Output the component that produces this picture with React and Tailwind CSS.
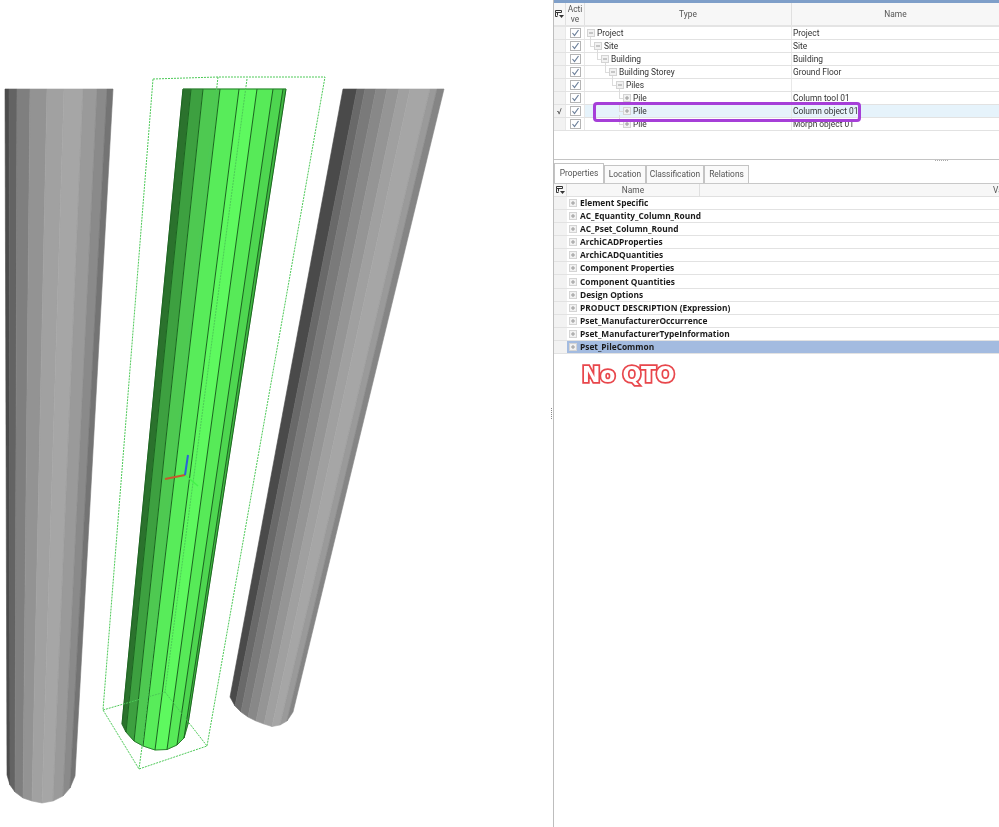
const greyLeft = {
  top: [5, 9, 17, 30, 47, 64, 83, 97, 107, 113],
  bottom: [[7, 775], [10, 785], [15, 792], [23, 798], [32, 801], [42, 803], [53, 801], [63, 796], [70, 788], [75, 776]],
  colors: ["#4c4c4c", "#636363", "#7f7f7f", "#939393", "#a1a1a1", "#a6a6a6", "#9a9a9a", "#8a8a8a", "#747474"],
};
const greyRight = {
  top: [343, 357, 365, 376, 387, 399, 410, 430, 437, 444],
  bottom: [[230, 697], [235, 706], [241, 712], [248, 717], [256, 721], [264, 724], [272, 726.5], [280, 725], [287, 721], [293, 712]],
  colors: ["#4a4a4a", "#696969", "#7a7a7a", "#888888", "#959595", "#a0a0a0", "#a6a6a6", "#9a9a9a", "#858585"],
};
const green = {
  top: [183, 191, 203, 220, 239, 257, 273, 283, 286],
  bottom: [[122, 724], [126, 732], [134, 741], [143, 746], [155, 750], [167, 749.5], [177, 745], [184, 738], [188, 724]],
  colors: ["#2b722d", "#3da040", "#4ec951", "#58ec5a", "#5ef95f", "#57ea58", "#4ed650", "#41b843"],
};

const Column = ({ data, lines }) => (
  <g>
    {data.colors.map((c, i) => {
      const a = data.bottom[i];
      const b = data.bottom[i + 1];
      return (
        <polygon
          key={i}
          points={`${data.top[i]},89 ${data.top[i + 1]},89 ${b[0]},${b[1]} ${a[0]},${a[1]}`}
          fill={c}
          stroke={c}
          strokeWidth="0.6"
        />
      );
    })}
    {lines &&
      data.top.map((x, i) => (
        <line key={i} x1={x} y1="89" x2={data.bottom[i][0]} y2={data.bottom[i][1]} stroke="#1c6420" strokeWidth="1" />
      ))}
  </g>
);

const Viewport = () => (
  <svg width="550" height="827" viewBox="0 0 550 827" className="block">
    <Column data={greyLeft} />
    <Column data={greyRight} />
    <Column data={green} lines />
    <line x1="183" y1="89" x2="286" y2="89" stroke="#2d7a30" strokeWidth="1" />
    <polyline
      points="122,724 126,732 134,741 143,746 155,750 167,749.5 177,745 184,738 188,724"
      fill="none"
      stroke="#1c6420"
      strokeWidth="0.8"
    />
    {/* selection box */}
    <g fill="none" stroke="#4cc957" strokeWidth="1" strokeDasharray="2 1">
      <polyline points="153,79 218,77 325,77 207,746 139,769 103,710 153,79" />
      <line x1="218" y1="77" x2="142" y2="747" />
      <line x1="247" y1="79" x2="165" y2="692" />
      <line x1="103" y1="710" x2="165" y2="692" />
      <line x1="165" y1="692" x2="207" y2="746" />
      <line x1="142" y1="747" x2="139" y2="769" />
    </g>
    {/* axis gizmo */}
    <line x1="185" y1="475" x2="198" y2="486" stroke="#46f04c" strokeWidth="1.5" />
    <line x1="185" y1="475" x2="165" y2="479" stroke="#c8592c" strokeWidth="2" />
    <line x1="185" y1="475" x2="188" y2="455" stroke="#2a63d8" strokeWidth="2" />
  </svg>
);

const ColumnMenu = () => (
  <svg width="9" height="8" viewBox="0 0 9 8" className="block">
    <path d="M0.5 0.5h6v2h-6zM0.5 2.5v4h2M2.5 2.5v3" fill="none" stroke="#333" />
    <path d="M4 5h5L6.5 8z" fill="#333" />
  </svg>
);

const Expander = ({ open }) => (
  <svg width="8" height="8" viewBox="0 0 8 8" className="block shrink-0">
    <rect x="0.5" y="0.5" width="7" height="7" fill="#f2f2f2" stroke="#d4d4d4" />
    <line x1="2" y1="4" x2="6" y2="4" stroke="#9a9a9a" />
    {!open && <line x1="4" y1="2" x2="4" y2="6" stroke="#9a9a9a" />}
  </svg>
);

const CheckBox = () => (
  <span className="flex h-[10px] w-[11px] items-center justify-center border border-[#b4b4b4] bg-white">
    <svg width="9" height="8" viewBox="0 0 9 8">
      <path d="M1.5 4l2 2.5L7.5 1" fill="none" stroke="#6b7f99" strokeWidth="1.2" />
    </svg>
  </span>
);

const treeRows = [
  { type: "Project", name: "Project", open: true, indent: "pl-[2px]" },
  { type: "Site", name: "Site", open: true, indent: "pl-[9px]", link: true },
  { type: "Building", name: "Building", open: true, indent: "pl-[16px]", link: true },
  { type: "Building Storey", name: "Ground Floor", open: true, indent: "pl-[24px]", link: true },
  { type: "Piles", name: "", open: true, indent: "pl-[31px]", link: true },
  { type: "Pile", name: "Column tool 01", indent: "pl-[38px]", link: true },
  { type: "Pile", name: "Column object 01", indent: "pl-[38px]", link: true, current: true },
  { type: "Pile", name: "Morph object 01", indent: "pl-[38px]", link: true },
];

const propertyRows = [
  "Element Specific",
  "AC_Equantity_Column_Round",
  "AC_Pset_Column_Round",
  "ArchiCADProperties",
  "ArchiCADQuantities",
  "Component Properties",
  "Component Quantities",
  "Design Options",
  "PRODUCT DESCRIPTION (Expression)",
  "Pset_ManufacturerOccurrence",
  "Pset_ManufacturerTypeInformation",
  "Pset_PileCommon",
];

const tabs = [
  { label: "Properties", width: "w-[50px]", active: true },
  { label: "Location", width: "w-[42px]" },
  { label: "Classification", width: "w-[58px]" },
  { label: "Relations", width: "w-[45px]" },
];

const TreeTable = () => (
  <div className="relative h-[160px] border-b border-[#c4c4c4]">
    <div className="h-[3px] bg-[#7f9fc9]" />
    <div className="flex h-[24px] border-b-2 border-[#e4e4e4] bg-[#f7f7f7] text-[#555]">
      <div className="flex w-[12px] items-center justify-center border-r border-[#e0e0e0]">
        <ColumnMenu />
      </div>
      <div className="flex w-[19px] items-center justify-center border-r border-[#e0e0e0] text-center leading-[10px]">
        Acti<br />ve
      </div>
      <div className="flex w-[207px] items-center justify-center border-r border-[#e0e0e0]">Type</div>
      <div className="flex flex-1 items-center justify-center">Name</div>
    </div>
    {treeRows.map((row, i) => (
      <div key={i} className="flex h-[13px] border-b border-[#e2e2e2] leading-[12px]">
        <div className="flex w-[12px] items-center justify-center border-r border-[#e8e8e8] bg-[#f2f2f2] text-[#444]">
          {row.current && "√"}
        </div>
        <div className="flex w-[19px] items-center justify-center border-r border-[#e8e8e8]">
          <CheckBox />
        </div>
        <div className={`flex w-[207px] items-center gap-[2px] border-r border-[#e8e8e8] ${row.indent} ${row.current ? "bg-[#e6f3fb]" : ""}`}>
          <span className="relative">
            {row.link && (
              <span className="absolute bottom-[3px] left-[-4px] h-[10px] w-[4px] border-b border-l border-[#dcdcdc]" />
            )}
            <Expander open={row.open} />
          </span>
          <span>{row.type}</span>
        </div>
        <div className={`flex-1 pl-[1px] ${row.current ? "bg-[#e6f3fb]" : ""}`}>{row.name}</div>
      </div>
    ))}
    {/* purple highlight over the selected row */}
    <div className="absolute left-[39px] top-[102px] h-[20px] w-[268px] rounded-[4px] border-[3px] border-[#a63fd8]" />
  </div>
);

const PropertiesTable = () => (
  <div className="flex-1">
    <div className="h-[4px] pl-[381px]">
      <div className="h-[1px] w-[13px] border-t border-dotted border-[#aaa]" />
    </div>
    <div className="flex h-[20px] items-end border-b border-[#c8c8c8] text-[#555]">
      {tabs.map((tab) => (
        <div
          key={tab.label}
          className={`flex items-center justify-center border border-b-0 border-[#c4c4c4] ${tab.width} ${tab.active ? "h-[20px] bg-white" : "h-[18px] bg-[#fafafa]"}`}
        >
          {tab.label}
        </div>
      ))}
    </div>
    <div className="flex h-[13px] border-b border-[#e0e0e0] bg-[#f7f7f7] text-[#555]">
      <div className="flex w-[13px] items-center justify-center border-r border-[#e0e0e0]">
        <ColumnMenu />
      </div>
      <div className="flex w-[133px] items-center justify-center border-r border-[#e0e0e0]">Name</div>
      <div className="flex-1 overflow-hidden whitespace-nowrap pl-[293px]">Value</div>
    </div>
    {propertyRows.map((label) => {
      const selected = label === "Pset_PileCommon";
      return (
        <div key={label} className="flex h-[13.09px] border-b border-[#e2e2e2] leading-[12px]">
          <div className="w-[13px] bg-[#f2f2f2]" />
          <div className={`flex flex-1 items-center gap-[3px] pl-[2px] font-['Open_Sans',sans-serif] text-[8.35px] font-bold text-[#1a1a1a] ${selected ? "bg-[#a3bbe0]" : ""}`}>
            <Expander />
            <span>{label}</span>
          </div>
        </div>
      );
    })}
    <div className="pl-[28px] pt-[8px] font-['DejaVu_Sans',sans-serif] text-[22px] font-bold leading-[26px] tracking-[-0.2px] text-white [-webkit-text-stroke:3.5px_#e8474c] [paint-order:stroke_fill]">
      No QTO
    </div>
  </div>
);

export default function App() {
  return (
    <div className="flex h-[827px] w-[999px] overflow-hidden bg-white font-['Roboto',sans-serif] text-[8.4px] text-[#333] blur-[0.4px]">
      <Viewport />
      <div className="flex w-[3px] flex-col items-center justify-center gap-[1px]">
        {[0, 1, 2, 3, 4, 5].map((d) => (
          <span key={d} className="h-[1px] w-[1px] bg-[#888]" />
        ))}
      </div>
      <div className="flex min-w-0 flex-1 flex-col border-l border-[#bdbdbd]">
        <TreeTable />
        <PropertiesTable />
      </div>
    </div>
  );
}
